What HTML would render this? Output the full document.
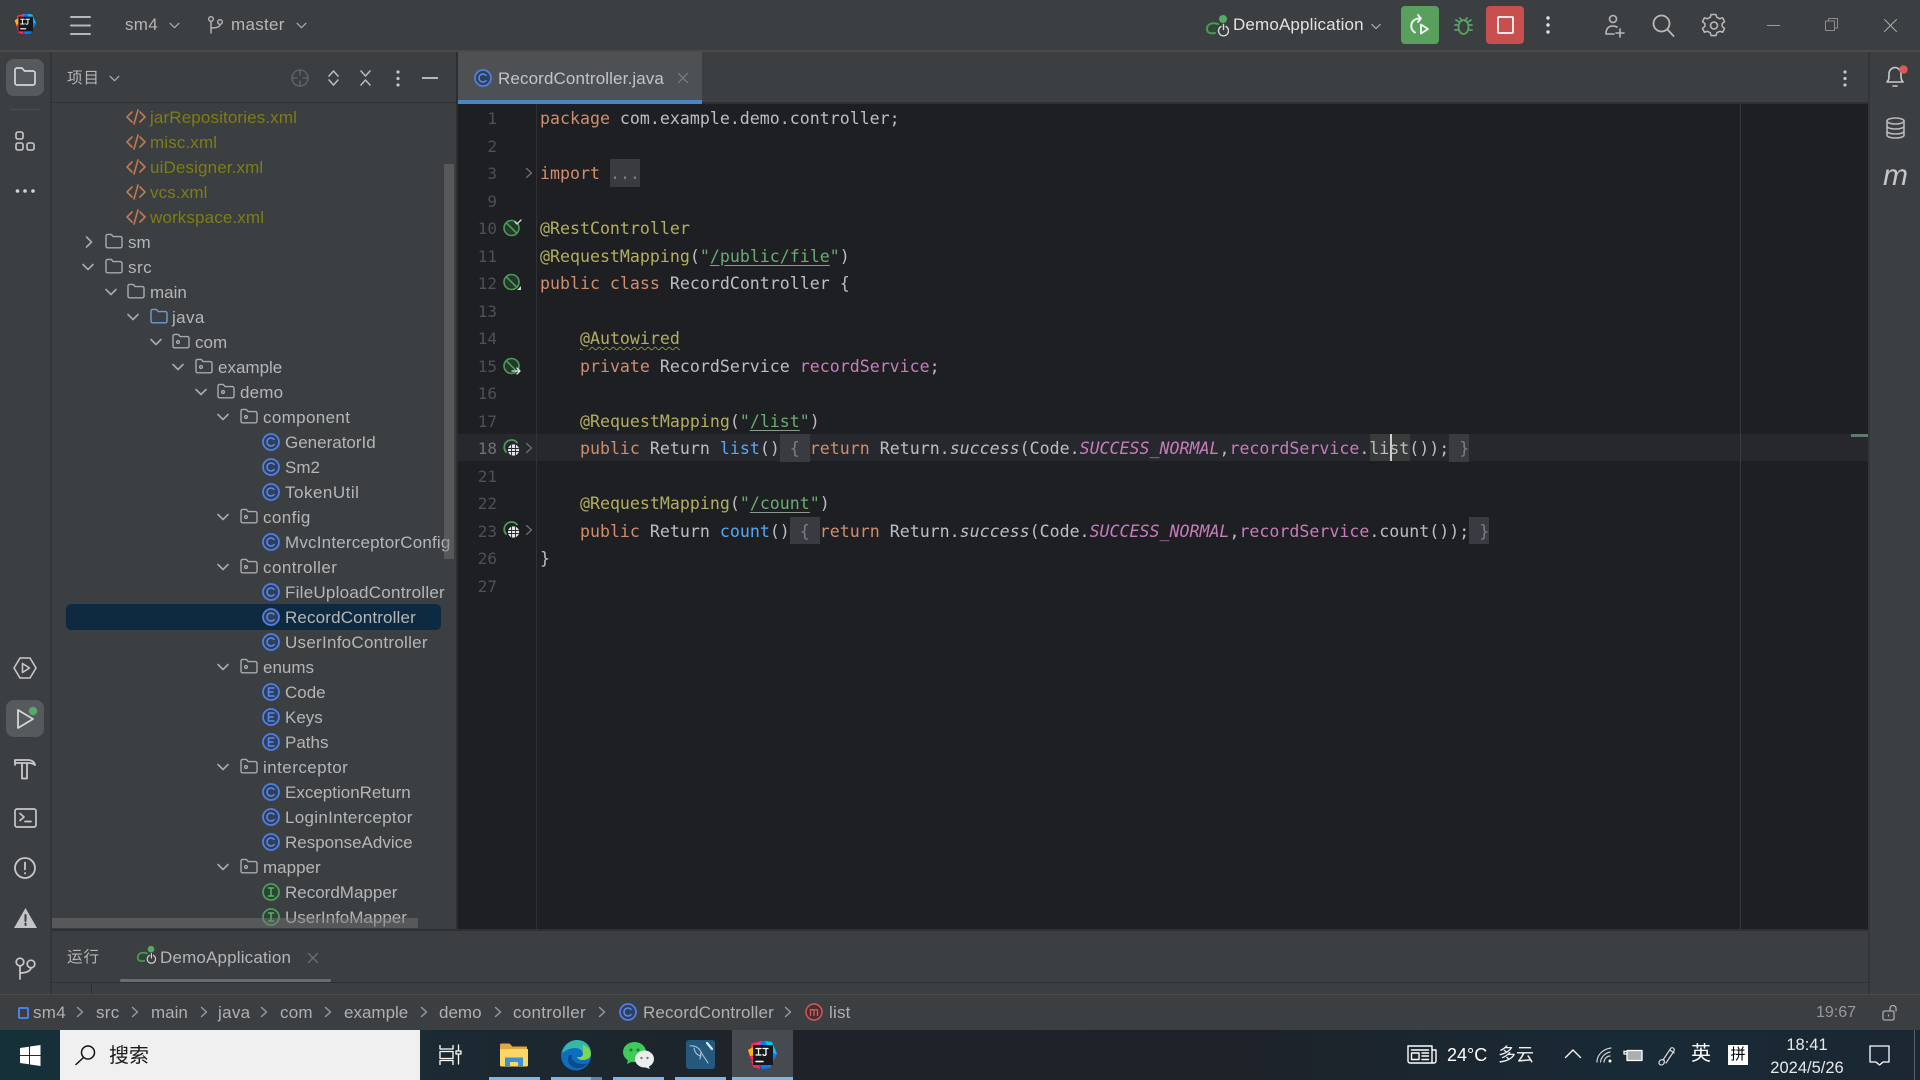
<!DOCTYPE html>
<html lang="zh"><head><meta charset="utf-8"><title>RecordController.java</title>
<style>
html,body{margin:0;padding:0;width:1920px;height:1080px;overflow:hidden;background:#3c3f41}
body{position:relative;font-family:"Liberation Sans","Noto Sans CJK SC",sans-serif;font-size:17px;color:#b4b6b8}
.a{position:absolute}
.t{position:absolute;white-space:nowrap;line-height:24px;height:24px}
svg{position:absolute;overflow:visible;fill:none;stroke-linecap:round;stroke-linejoin:round}
.s{stroke:#b6b8ba;stroke-width:1.6}
#tree{position:absolute;left:51px;top:103px;width:405px;height:827px;overflow:hidden}
#tree .in{position:absolute;left:-51px;top:1.5px;width:600px}
.r{position:relative;height:25px;line-height:25px;white-space:nowrap}
.r span{position:absolute;top:0}
.r svg.ch{width:12px;height:8px;top:8px;stroke:#a8abad;stroke-width:1.6}
.r svg.f{width:18px;height:16px;top:3px;stroke:#a8abad;stroke-width:1.4}
.r svg.k{width:20px;height:20px;top:2px;left:261px}
.x{color:#7d7d14;letter-spacing:.13px}
#code{font-family:"DejaVu Sans Mono","Liberation Mono",monospace;font-size:16.6px;color:#bcbec4}
.c{position:absolute;left:540px;height:27.5px;line-height:29.5px;white-space:pre}
.n{position:absolute;left:470px;width:27px;text-align:right;height:27.5px;line-height:29.5px;color:#4b5059;font-family:"DejaVu Sans Mono","Liberation Mono",monospace;font-size:16px}
.kw{color:#cf8e6d}.an{color:#b3ae60}.st{color:#6aab73}.fl{color:#c77dbb}.md{color:#56a8f5}
.u{text-decoration:underline;text-decoration-color:#8c9a90;text-underline-offset:3px}
.it{font-style:italic}
.fb{background:#393b40;color:#7a7e85;display:inline-block;height:27.5px}
.bc{position:absolute;top:1001px;line-height:24px;height:24px;color:#aeb0b2;white-space:nowrap}
.tb{position:absolute;top:1077px;height:3px;background:#76b9ed}
</style></head><body>
<svg width="0" height="0" style="position:absolute">
<defs>
<symbol id="fo" viewBox="0 0 18 16"><path d="M1 3a1.6 1.6 0 0 1 1.6-1.6h3.6l2 2.2h7.2A1.6 1.6 0 0 1 17 5.2v8a1.6 1.6 0 0 1-1.6 1.6H2.6A1.6 1.6 0 0 1 1 13.2z"/></symbol>
<symbol id="pk" viewBox="0 0 18 16"><path d="M1 3a1.6 1.6 0 0 1 1.6-1.6h3.6l2 2.2h7.2A1.6 1.6 0 0 1 17 5.2v8a1.6 1.6 0 0 1-1.6 1.6H2.6A1.6 1.6 0 0 1 1 13.2z"/><circle cx="6" cy="9" r="1.4"/></symbol>
<symbol id="dn" viewBox="0 0 12 8"><path d="M1 1.5l5 5 5-5"/></symbol>
<symbol id="rt" viewBox="0 0 8 12"><path d="M1.5 1l5 5-5 5"/></symbol>
<symbol id="cc" viewBox="0 0 20 20"><circle cx="10" cy="10" r="8" fill="#2f3f5e" stroke="#4f7fe0" stroke-width="1.8"/><path d="M13 7.4A4 4 0 1 0 13 12.6" stroke="#5d8ae6" stroke-width="1.5" fill="none"/></symbol>
<symbol id="ce" viewBox="0 0 20 20"><circle cx="10" cy="10" r="8" fill="#2f3f5e" stroke="#4f7fe0" stroke-width="1.8"/><path d="M13 6H7.5v8H13M7.5 10H12" stroke="#5d8ae6" stroke-width="1.5" fill="none"/></symbol>
<symbol id="ci" viewBox="0 0 20 20"><circle cx="10" cy="10" r="8" fill="#2b4532" stroke="#4e9a5d" stroke-width="1.8"/><path d="M7.5 6h5M10 6v8M7.5 14h5" stroke="#5fad70" stroke-width="1.5" fill="none"/></symbol>
<symbol id="xm" viewBox="0 0 20 16"><path d="M6 3L1 8l5 5M14 3l5 5-5 5M12 1L8 15" stroke="#c07a52" stroke-width="1.6" fill="none"/></symbol>
<symbol id="bean" viewBox="0 0 18 18"><circle cx="8.5" cy="9" r="7.5" stroke="#4c9a5a" stroke-width="1.6" fill="#24382a"/><path d="M3.5 4l10 10" stroke="#4c9a5a" stroke-width="1.6"/></symbol>
<symbol id="web" viewBox="0 0 18 18"><path d="M14 3.5A7 7 0 1 0 3 13" stroke="#4c9a5a" stroke-width="1.8" fill="none"/><circle cx="10.5" cy="11" r="5.6" fill="#e2e4e6"/><path d="M5.4 9.5h10M5.4 12.5h10M8.5 6v10M12.5 6v10" stroke="#26282e" stroke-width=".9"/></symbol>
<symbol id="ij" viewBox="0 0 30 30"><path d="M4 4L14 1l3 6-11 9z" fill="#fc318c"/><path d="M14 1l11 1 5 12-7 14-8 1-4-8z" fill="#087cfa"/><path d="M18 1l7 1 5 12-6-1z" fill="#07c3f2"/><path d="M2 11l5-9 6 5-6 14-4-3z" fill="#fe2857"/><path d="M1 10l5-3 3 8-6 1z" fill="#fdb60d"/><path d="M4 20l8 3 1 6-7-2z" fill="#fe2857"/><rect x="6" y="5" width="20" height="20" fill="#16181c"/><path d="M9 8.5h5M11.5 8.5v6.5M9 15h5M16 8.5h5M19 8.5v5.5a1.6 1.6 0 0 1-3 .6" stroke="#fff" stroke-width="1.3" fill="none"/><path d="M9 21.5h7" stroke="#fff" stroke-width="1.5"/></symbol>
<symbol id="runc" viewBox="0 0 24 24"><path d="M13 10C7 8 2 10 2 15c0 4 4 5 8 4" stroke="#4c9a5a" stroke-width="2" fill="#2d4a35"/><circle cx="18" cy="5" r="4" fill="#57a865"/><path d="M16 12.5a5 5 0 1 0 5 0M18.500 10.500v5" stroke="#d8dadc" stroke-width="1.400" fill="none"/></symbol>
</defs>
</svg>

<!-- chrome lines -->
<div class="a" style="left:0;top:50px;width:1920px;height:2px;background:#4b4a48"></div>
<div class="a" style="left:50px;top:52px;width:2px;height:942px;background:#333638"></div>
<div class="a" style="left:52px;top:102px;width:405px;height:1px;background:#2e3032"></div>
<div class="a" style="left:52px;top:929px;width:1816px;height:2px;background:#2e3032"></div>
<div class="a" style="left:52px;top:982px;width:1816px;height:1px;background:#2e3032"></div>
<div class="a" style="left:91px;top:982px;width:1px;height:12px;background:#2e3032"></div>
<div class="a" style="left:0;top:994px;width:1920px;height:1px;background:#4b4a48"></div>
<div class="a" style="left:456px;top:52px;width:2px;height:878px;background:#2c2e30"></div>
<div class="a" style="left:1868px;top:52px;width:2px;height:942px;background:#333638"></div>

<!-- title bar -->
<svg style="left:14px;top:13px" width="22" height="22"><use href="#ij" width="22" height="22"/></svg>
<svg class="s" style="left:71px;top:16px;stroke-width:2" width="20" height="20"><path d="M0 1h19M0 9.500h19M0 18h19"/></svg>
<div class="t" style="left:125px;top:13px;letter-spacing:.3px">sm4</div>
<svg class="s" style="left:169px;top:22px;stroke:#a8abad;stroke-width:1.4" width="11" height="7"><use href="#dn" width="11" height="7"/></svg>
<svg class="s" style="left:208px;top:16px;stroke-width:1.400" width="15" height="18"><circle cx="3" cy="3" r="2.300"/><circle cx="12" cy="6" r="2.300"/><path d="M3 5.500V17M3 12c5 0 9-1 9-3.500"/></svg>
<div class="t" style="left:231px;top:13px;letter-spacing:.3px">master</div>
<svg class="s" style="left:296px;top:22px;stroke:#a8abad;stroke-width:1.4" width="11" height="7"><use href="#dn" width="11" height="7"/></svg>

<svg style="left:1205px;top:14px" width="24" height="24"><use href="#runc" width="24" height="24"/></svg>
<div class="t" style="left:1233px;top:13px;color:#dfe1e3;letter-spacing:.15px">DemoApplication</div>
<svg style="left:1371px;top:23px;stroke:#b6b8ba;stroke-width:1.3" width="10" height="7"><use href="#dn" width="10" height="7"/></svg>
<div class="a" style="left:1401px;top:6px;width:38px;height:38px;border-radius:4px;background:#59a05f"></div>
<svg style="left:1409px;top:14px;stroke:#f0f2f0;stroke-width:1.900" width="21" height="23"><path d="M10 4.500A7.500 7.500 0 0 0 6 18.500M9 1l3 3.500-3 3.500"/><path d="M12 10.500v9l7-4.500z"/></svg>
<svg style="left:1454px;top:15px;stroke:#55a35f;stroke-width:1.800" width="19" height="21"><ellipse cx="9.500" cy="12" rx="5" ry="7"/><path d="M6 3l2 3M13 3l-2 3M4.500 10H1M14.500 10H18M4.500 15H1M14.500 15H18M5 7L2 5M14 7l3-2"/></svg>
<div class="a" style="left:1486px;top:6px;width:38px;height:38px;border-radius:4px;background:#c94f4f"></div>
<div class="a" style="left:1497px;top:16px;width:13px;height:14px;border:2px solid #f4e6e6;border-radius:2px"></div>
<svg style="left:1545px;top:15px;fill:#e0e2e4" width="6" height="20"><circle cx="3" cy="3" r="1.700"/><circle cx="3" cy="10" r="1.700"/><circle cx="3" cy="17" r="1.700"/></svg>
<svg class="s" style="left:1604px;top:14px" width="22" height="24"><circle cx="9" cy="5" r="3.500"/><path d="M2 20c0-5 2-8 7-8 2 0 3 .5 4 1M2 20h8M16 15v8M12 19h8"/></svg>
<svg class="s" style="left:1652px;top:14px;stroke-width:1.800" width="22" height="23"><circle cx="9.500" cy="9.500" r="8"/><path d="M15.500 15.500l6 6.500"/></svg>
<svg class="s" style="left:1702px;top:14px" width="24" height="24"><path d="M9 1h5l1 3 3 1.500 3-1 2 4-2.500 2v3l2.500 2-2 4-3-1-3 1.500-1 3H9l-1-3-3-1.500-3 1-2-4 2.500-2v-3L0 8.500l2-4 3 1L8 4z" transform="translate(.5 -.5) scale(.96)"/><circle cx="12" cy="11.500" r="3.500"/></svg>
<div class="a" style="left:1767px;top:25px;width:13px;height:1px;background:#9a9c9e"></div>
<svg style="left:1825px;top:18px;stroke:#8a8c8e;stroke-width:1" width="13" height="13"><rect x=".5" y="3" width="9" height="9.500"/><path d="M3.500 3V.5h9v9.500H9.500"/></svg>
<svg style="left:1884px;top:19px;stroke:#a8aaac;stroke-width:1" width="13" height="13"><path d="M.5.500l12 12M12.500.500l-12 12"/></svg>

<!-- left strip -->
<div class="a" style="left:6px;top:59px;width:38px;height:37px;border-radius:8px;background:#565a5c"></div>
<svg class="s" style="left:14px;top:67px;stroke:#d4d6d8;stroke-width:1.700" width="22" height="20"><path d="M1 3a2 2 0 0 1 2-2h5l2.500 3H19a2 2 0 0 1 2 2v10a2 2 0 0 1-2 2H3a2 2 0 0 1-2-2z"/></svg>
<div class="a" style="left:10px;top:109px;width:30px;height:1px;background:#4a4d50"></div>
<svg class="s" style="left:15px;top:131px;stroke:#c6c8ca" width="21" height="21"><rect x="1" y="1" width="7" height="7" rx="1.800"/><rect x="1" y="12" width="7" height="7" rx="1.800"/><rect x="12" y="12" width="7" height="7" rx="1.800"/></svg>
<svg style="left:15px;top:188px;fill:#d0d2d4" width="21" height="6"><circle cx="2.500" cy="3" r="1.800"/><circle cx="10" cy="3" r="1.800"/><circle cx="18" cy="3" r="1.800"/></svg>
<svg class="s" style="left:13px;top:657px;stroke:#c6c8ca" width="24" height="22"><path d="M7 1h10l6 10-6 10H7L1 11z"/><path d="M9.500 6.500v9l7-4.500z"/></svg>
<div class="a" style="left:6px;top:700px;width:38px;height:37px;border-radius:8px;background:#565a5c"></div>
<svg class="s" style="left:16px;top:708px;stroke:#d4d6d8;stroke-width:1.800" width="20" height="22"><path d="M2 2v18l15-9z"/></svg>
<svg style="left:28px;top:706px;fill:#57a865" width="10" height="10"><circle cx="5" cy="5" r="4.300"/></svg>
<svg class="s" style="left:14px;top:757px;stroke:#c6c8ca;stroke-width:1.800" width="22" height="23"><path d="M1 8V3h13c3 0 6 1 7 5-2-1.500-4-2-6-2H1M8 6v15.500h5V6"/></svg>
<svg class="s" style="left:14px;top:808px;stroke:#c6c8ca;stroke-width:1.700" width="23" height="20"><rect x="1" y="1" width="21" height="18" rx="2"/><path d="M6 5.500l4 3.500-4 3.500M11 13.500h6"/></svg>
<svg class="s" style="left:14px;top:857px;stroke:#c6c8ca;stroke-width:1.800" width="22" height="22"><circle cx="11" cy="11" r="10"/><path d="M11 5.500v7M11 16v.5"/></svg>
<svg style="left:14px;top:908px" width="23" height="20"><path d="M11.500 0L23 20H0z" fill="#c2c4c6"/><path d="M11.500 7v6M11.500 15.500v1.500" stroke="#3c3f41" stroke-width="2"/></svg>
<svg class="s" style="left:15px;top:957px;stroke:#c6c8ca;stroke-width:1.700" width="21" height="23"><circle cx="5" cy="5" r="3.800"/><circle cx="16" cy="7" r="3.800"/><path d="M5 9v13M5 16c6 0 11-2 11-5.500"/></svg>

<!-- project header -->
<div class="t" style="left:67px;top:67px;letter-spacing:1px;font-size:15.500px">项目</div>
<svg style="left:109px;top:75px;stroke:#a8abad;stroke-width:1.400" width="11" height="7"><use href="#dn" width="11" height="7"/></svg>
<svg style="left:291px;top:69px;stroke:#5e6163;stroke-width:1.600" width="18" height="18"><circle cx="9" cy="9" r="8"/><path d="M9 1v5M9 12v5M1 9h5M12 9h5"/></svg>
<svg class="s" style="left:328px;top:70px" width="11" height="16"><path d="M1 6l4.500-5L10 6M1 10l4.500 5L10 10"/></svg>
<svg class="s" style="left:360px;top:70px" width="11" height="16"><path d="M1 1l4.500 5L10 1M1 15l4.500-5L10 15"/></svg>
<svg style="left:395px;top:70px;fill:#c4c6c8" width="6" height="17"><circle cx="3" cy="2" r="1.600"/><circle cx="3" cy="8.500" r="1.600"/><circle cx="3" cy="15" r="1.600"/></svg>
<div class="a" style="left:422px;top:77px;width:16px;height:2px;background:#b6b8ba"></div>

<!-- tree -->
<div id="tree"><div class="in">
<div class="r"><svg style="left:126px;top:4px" width="20" height="16"><use href="#xm" width="20" height="16"/></svg><span class="x" style="left:150px">jarRepositories.xml</span></div>
<div class="r"><svg style="left:126px;top:4px" width="20" height="16"><use href="#xm" width="20" height="16"/></svg><span class="x" style="left:150px">misc.xml</span></div>
<div class="r"><svg style="left:126px;top:4px" width="20" height="16"><use href="#xm" width="20" height="16"/></svg><span class="x" style="left:150px">uiDesigner.xml</span></div>
<div class="r"><svg style="left:126px;top:4px" width="20" height="16"><use href="#xm" width="20" height="16"/></svg><span class="x" style="left:150px">vcs.xml</span></div>
<div class="r"><svg style="left:126px;top:4px" width="20" height="16"><use href="#xm" width="20" height="16"/></svg><span class="x" style="left:150px">workspace.xml</span></div>
<div class="r"><svg style="left:85px;top:6px;width:8px;height:12px;stroke:#a8abad;stroke-width:1.6"><use href="#rt" width="8" height="12"/></svg><svg class="f" style="left:105px"><use href="#fo" width="18" height="16"/></svg><span style="left:128px">sm</span></div>
<div class="r"><svg class="ch" style="left:82px"><use href="#dn" width="12" height="8"/></svg><svg class="f" style="left:105px"><use href="#fo" width="18" height="16"/></svg><span style="left:128px;letter-spacing:.5px">src</span></div>
<div class="r"><svg class="ch" style="left:105px"><use href="#dn" width="12" height="8"/></svg><svg class="f" style="left:127px"><use href="#fo" width="18" height="16"/></svg><span style="left:150px">main</span></div>
<div class="r"><svg class="ch" style="left:127px"><use href="#dn" width="12" height="8"/></svg><svg class="f" style="left:150px;stroke:#6f9bd8"><use href="#fo" width="18" height="16"/></svg><span style="left:172px;letter-spacing:.4px">java</span></div>
<div class="r"><svg class="ch" style="left:150px"><use href="#dn" width="12" height="8"/></svg><svg class="f" style="left:172px"><use href="#pk" width="18" height="16"/></svg><span style="left:195px">com</span></div>
<div class="r"><svg class="ch" style="left:172px"><use href="#dn" width="12" height="8"/></svg><svg class="f" style="left:195px"><use href="#pk" width="18" height="16"/></svg><span style="left:218px">example</span></div>
<div class="r"><svg class="ch" style="left:195px"><use href="#dn" width="12" height="8"/></svg><svg class="f" style="left:217px"><use href="#pk" width="18" height="16"/></svg><span style="left:240px;letter-spacing:.2px">demo</span></div>
<div class="r"><svg class="ch" style="left:217px"><use href="#dn" width="12" height="8"/></svg><svg class="f" style="left:240px"><use href="#pk" width="18" height="16"/></svg><span style="left:263px;letter-spacing:.35px">component</span></div>
<div class="r"><svg class="k"><use href="#cc" width="20" height="20"/></svg><span style="left:285px">GeneratorId</span></div>
<div class="r"><svg class="k"><use href="#cc" width="20" height="20"/></svg><span style="left:285px">Sm2</span></div>
<div class="r"><svg class="k"><use href="#cc" width="20" height="20"/></svg><span style="left:285px;letter-spacing:.5px">TokenUtil</span></div>
<div class="r"><svg class="ch" style="left:217px"><use href="#dn" width="12" height="8"/></svg><svg class="f" style="left:240px"><use href="#pk" width="18" height="16"/></svg><span style="left:263px;letter-spacing:.4px">config</span></div>
<div class="r"><svg class="k"><use href="#cc" width="20" height="20"/></svg><span style="left:285px;letter-spacing:.2px">MvcInterceptorConfig</span></div>
<div class="r"><svg class="ch" style="left:217px"><use href="#dn" width="12" height="8"/></svg><svg class="f" style="left:240px"><use href="#pk" width="18" height="16"/></svg><span style="left:263px;letter-spacing:.45px">controller</span></div>
<div class="r"><svg class="k"><use href="#cc" width="20" height="20"/></svg><span style="left:285px;letter-spacing:.25px">FileUploadController</span></div>
<div class="r"><div class="a" style="left:66px;top:-1px;width:375px;height:26px;border-radius:5px;background:#0e2a40"></div><svg class="k"><use href="#cc" width="20" height="20"/></svg><span style="left:285px;letter-spacing:.15px">RecordController</span></div>
<div class="r"><svg class="k"><use href="#cc" width="20" height="20"/></svg><span style="left:285px;letter-spacing:.27px">UserInfoController</span></div>
<div class="r"><svg class="ch" style="left:217px"><use href="#dn" width="12" height="8"/></svg><svg class="f" style="left:240px"><use href="#pk" width="18" height="16"/></svg><span style="left:263px">enums</span></div>
<div class="r"><svg class="k"><use href="#ce" width="20" height="20"/></svg><span style="left:285px">Code</span></div>
<div class="r"><svg class="k"><use href="#ce" width="20" height="20"/></svg><span style="left:285px">Keys</span></div>
<div class="r"><svg class="k"><use href="#ce" width="20" height="20"/></svg><span style="left:285px">Paths</span></div>
<div class="r"><svg class="ch" style="left:217px"><use href="#dn" width="12" height="8"/></svg><svg class="f" style="left:240px"><use href="#pk" width="18" height="16"/></svg><span style="left:263px;letter-spacing:.45px">interceptor</span></div>
<div class="r"><svg class="k"><use href="#cc" width="20" height="20"/></svg><span style="left:285px">ExceptionReturn</span></div>
<div class="r"><svg class="k"><use href="#cc" width="20" height="20"/></svg><span style="left:285px;letter-spacing:.3px">LoginInterceptor</span></div>
<div class="r"><svg class="k"><use href="#cc" width="20" height="20"/></svg><span style="left:285px">ResponseAdvice</span></div>
<div class="r"><svg class="ch" style="left:217px"><use href="#dn" width="12" height="8"/></svg><svg class="f" style="left:240px"><use href="#pk" width="18" height="16"/></svg><span style="left:263px">mapper</span></div>
<div class="r"><svg class="k"><use href="#ci" width="20" height="20"/></svg><span style="left:285px">RecordMapper</span></div>
<div class="r"><svg class="k"><use href="#ci" width="20" height="20"/></svg><span style="left:285px">UserInfoMapper</span></div>
</div></div>
<div class="a" style="left:444px;top:164px;width:10px;height:395px;background:rgba(120,120,122,.45)"></div>
<div class="a" style="left:52px;top:918px;width:366px;height:10px;background:rgba(120,120,122,.45)"></div>

<!-- tabs -->
<div class="a" style="left:458px;top:52px;width:244px;height:48px;background:#4e5154"></div>
<div class="a" style="left:458px;top:100px;width:244px;height:4px;background:#4a85c6"></div>
<div class="a" style="left:702px;top:102px;width:1166px;height:2px;background:#2e3032"></div>
<svg style="left:473px;top:68px" width="20" height="20"><use href="#cc" width="20" height="20"/></svg>
<div class="t" style="left:498px;top:67px;color:#c2c4c6;letter-spacing:.12px">RecordController.java</div>
<svg style="left:678px;top:73px;stroke:#7d8083;stroke-width:1.200" width="10" height="10"><path d="M.5.500l9 9M9.500.500l-9 9"/></svg>
<svg style="left:1842px;top:70px;fill:#c4c6c8" width="6" height="17"><circle cx="3" cy="2" r="1.600"/><circle cx="3" cy="8.500" r="1.600"/><circle cx="3" cy="15" r="1.600"/></svg>

<!-- editor -->
<div class="a" style="left:458px;top:104px;width:1410px;height:825px;background:#1e1f22"></div>
<div class="a" style="left:458px;top:434px;width:1410px;height:27px;background:#26282e"></div>
<div class="a" style="left:536px;top:104px;width:1px;height:825px;background:#303236"></div>
<div class="a" style="left:1740px;top:104px;width:1px;height:825px;background:#393b3f"></div>
<div class="a" style="left:1851px;top:434px;width:17px;height:3px;background:#5f7a68"></div>
<div class="a" style="left:1370px;top:434px;width:40px;height:27px;background:#373b39"></div>
<div class="a" style="left:1390px;top:434px;width:2px;height:27px;background:#ced0d6"></div>

<div id="code">
<div class="n" style="top:104px">1</div><div class="n" style="top:131.500px">2</div><div class="n" style="top:159px">3</div><div class="n" style="top:186.500px">9</div><div class="n" style="top:214px">10</div><div class="n" style="top:241.500px">11</div><div class="n" style="top:269px">12</div><div class="n" style="top:296.500px">13</div><div class="n" style="top:324px">14</div><div class="n" style="top:351.500px">15</div><div class="n" style="top:379px">16</div><div class="n" style="top:406.500px">17</div><div class="n" style="top:434px;color:#6e7178">18</div><div class="n" style="top:461.500px">21</div><div class="n" style="top:489px">22</div><div class="n" style="top:516.500px">23</div><div class="n" style="top:544px">26</div><div class="n" style="top:571.500px">27</div>
<div class="c" style="top:104px"><span class="kw">package</span> com.example.demo.controller;</div>
<div class="c" style="top:159px"><span class="kw">import</span> <span class="fb">...</span></div>
<div class="c" style="top:214px"><span class="an">@RestController</span></div>
<div class="c" style="top:241.500px"><span class="an">@RequestMapping</span>(<span class="st">"<span class="u">/public/file</span>"</span>)</div>
<div class="c" style="top:269px"><span class="kw">public class</span> RecordController {</div>
<div class="c" style="top:324px">    <span class="an" style="text-decoration:underline wavy #8a8a40 1px;text-underline-offset:2px">@Autowired</span></div>
<div class="c" style="top:351.500px">    <span class="kw">private</span> RecordService <span class="fl">recordService</span>;</div>
<div class="c" style="top:406.500px">    <span class="an">@RequestMapping</span>(<span class="st">"<span class="u">/list</span>"</span>)</div>
<div class="c" style="top:434px">    <span class="kw">public</span> Return <span class="md">list</span>()<span class="fb"> { </span><span class="kw">return</span> Return.<span class="it">success</span>(Code.<span class="fl it">SUCCESS_NORMAL</span>,<span class="fl">recordService</span>.list());<span class="fb"> }</span></div>
<div class="c" style="top:489px">    <span class="an">@RequestMapping</span>(<span class="st">"<span class="u">/count</span>"</span>)</div>
<div class="c" style="top:516.500px">    <span class="kw">public</span> Return <span class="md">count</span>()<span class="fb"> { </span><span class="kw">return</span> Return.<span class="it">success</span>(Code.<span class="fl it">SUCCESS_NORMAL</span>,<span class="fl">recordService</span>.count());<span class="fb"> }</span></div>
<div class="c" style="top:544px">}</div>
</div>
<svg style="left:526px;top:168px;stroke:#6f7276;stroke-width:1.200" width="6" height="10"><path d="M.5.500l5 4.500-5 4.500"/></svg>
<svg style="left:526px;top:443px;stroke:#6f7276;stroke-width:1.200" width="6" height="10"><path d="M.5.500l5 4.500-5 4.500"/></svg>
<svg style="left:526px;top:525px;stroke:#6f7276;stroke-width:1.200" width="6" height="10"><path d="M.5.500l5 4.500-5 4.500"/></svg>
<svg style="left:503px;top:219px" width="18" height="18"><use href="#bean" width="18" height="18"/><path d="M12 3l2 2 4-4" stroke="#d0d2d4" stroke-width="1.400"/></svg>
<svg style="left:503px;top:273px" width="18" height="18"><use href="#bean" width="18" height="18"/><path d="M14 17h4v-4z" fill="#d0d2d4"/></svg>
<svg style="left:503px;top:357px" width="18" height="18"><use href="#bean" width="18" height="18"/><path d="M9 14h8M14 11l3 3-3 3" stroke="#e0e2e4" stroke-width="1.300"/></svg>
<svg style="left:503px;top:439px" width="18" height="18"><use href="#web" width="18" height="18"/></svg>
<svg style="left:503px;top:521px" width="18" height="18"><use href="#web" width="18" height="18"/></svg>

<!-- right strip -->
<svg class="s" style="left:1885px;top:65px;stroke:#c8cacc" width="20" height="24"><path d="M2 17c2-2 2-4 2-8 0-4 3-6.500 6-6.500S16 5 16 9c0 4 0 6 2 8zM8 21h4"/></svg>
<svg style="left:1899px;top:65px;fill:#e05555" width="9" height="9"><circle cx="4.500" cy="4.500" r="4.200"/></svg>
<svg class="s" style="left:1886px;top:117px;stroke:#b6b8ba" width="19" height="22"><ellipse cx="9.500" cy="4" rx="8.500" ry="3"/><path d="M1 4v14c0 2 4 3 8.500 3s8.500-1 8.500-3V4M1 9c0 2 4 3 8.500 3S18 11 18 9M1 14c0 2 4 3 8.500 3s8.500-1 8.500-3"/></svg>
<div class="t" style="left:1883px;top:162px;font-size:30px;font-style:italic;color:#c4c6c8;line-height:28px;height:28px">m</div>

<!-- bottom tabs -->
<div class="t" style="left:67px;top:946px;font-size:15.500px;letter-spacing:1px">运行</div>
<svg style="left:136px;top:945px" width="20" height="20"><use href="#runc" width="20" height="20"/></svg>
<div class="t" style="left:160px;top:946px;letter-spacing:.17px">DemoApplication</div>
<svg style="left:308px;top:953px;stroke:#6c6f72;stroke-width:1.300" width="10" height="10"><path d="M.5.500l9 9M9.500.500l-9 9"/></svg>
<div class="a" style="left:120px;top:979px;width:211px;height:3px;border-radius:2px;background:#6b6e71"></div>

<!-- breadcrumb -->
<div class="a" style="left:18px;top:1007px;width:7px;height:8px;border:2px solid #4a80e0;border-radius:2px"></div>
<div class="bc" style="left:33px;letter-spacing:.3px">sm4</div>
<div class="bc" style="left:96px;letter-spacing:.3px">src</div>
<div class="bc" style="left:151px">main</div>
<div class="bc" style="left:218px;letter-spacing:.3px">java</div>
<div class="bc" style="left:280px;letter-spacing:.2px">com</div>
<div class="bc" style="left:344px">example</div>
<div class="bc" style="left:439px">demo</div>
<div class="bc" style="left:513px;letter-spacing:.3px">controller</div>
<svg style="left:618px;top:1002px" width="20" height="20"><use href="#cc" width="20" height="20"/></svg>
<div class="bc" style="left:643px;letter-spacing:.15px">RecordController</div>
<svg style="left:804px;top:1002px" width="20" height="20"><circle cx="10" cy="10" r="8" fill="#4a2c30" stroke="#c75450" stroke-width="1.700"/><path d="M6.500 13.500v-6M6.500 9c0-2 3.500-2 3.500 0v4.500M10 9c0-2 3.500-2 3.500 0v4.500" stroke="#d06060" stroke-width="1.300"/></svg>
<div class="bc" style="left:829px;letter-spacing:.2px">list</div>
<svg style="left:77px;top:1007px;stroke:#9a9c9e;stroke-width:1.400" width="6" height="10"><path d="M.5.500l5 4.500-5 4.500"/></svg>
<svg style="left:132px;top:1007px;stroke:#9a9c9e;stroke-width:1.400" width="6" height="10"><path d="M.5.500l5 4.500-5 4.500"/></svg>
<svg style="left:201px;top:1007px;stroke:#9a9c9e;stroke-width:1.400" width="6" height="10"><path d="M.5.500l5 4.500-5 4.500"/></svg>
<svg style="left:261px;top:1007px;stroke:#9a9c9e;stroke-width:1.400" width="6" height="10"><path d="M.5.500l5 4.500-5 4.500"/></svg>
<svg style="left:325px;top:1007px;stroke:#9a9c9e;stroke-width:1.400" width="6" height="10"><path d="M.5.500l5 4.500-5 4.500"/></svg>
<svg style="left:421px;top:1007px;stroke:#9a9c9e;stroke-width:1.400" width="6" height="10"><path d="M.5.500l5 4.500-5 4.500"/></svg>
<svg style="left:495px;top:1007px;stroke:#9a9c9e;stroke-width:1.400" width="6" height="10"><path d="M.5.500l5 4.500-5 4.500"/></svg>
<svg style="left:599px;top:1007px;stroke:#9a9c9e;stroke-width:1.400" width="6" height="10"><path d="M.5.500l5 4.500-5 4.500"/></svg>
<svg style="left:785px;top:1007px;stroke:#9a9c9e;stroke-width:1.400" width="6" height="10"><path d="M.5.500l5 4.500-5 4.500"/></svg>
<div class="bc" style="left:1816px;font-size:16px;color:#97999b">19:67</div>
<svg class="s" style="left:1882px;top:1005px;stroke:#a8aaac;stroke-width:1.300" width="17" height="16"><rect x="1" y="6" width="11" height="9" rx="1.500"/><path d="M8 6V3.500a3 3 0 0 1 6 0V6M6.500 10v1"/></svg>

<!-- taskbar -->
<div class="a" style="left:0;top:1030px;width:1920px;height:50px;background:linear-gradient(90deg,#16303a 0,#1b2a33 22%,#1e2329 40%,#1d2229 65%,#182a36 85%,#1b2733 100%)"></div>
<svg style="left:20px;top:1045px;fill:#fff" width="21" height="21"><path d="M0 3l9-1.300v8.300H0zM10 1.500L20.500 0v10H10zM0 11h9v8.300L0 18zM10 11h10.500v10L10 19.500z"/></svg>
<div class="a" style="left:60px;top:1030px;width:360px;height:50px;background:#f0f0f0"></div>
<svg style="left:75px;top:1045px;stroke:#111;stroke-width:1.500" width="21" height="20"><circle cx="13" cy="7.500" r="6.500"/><path d="M8.500 12.500L1 19.500"/></svg>
<div class="t" style="left:109px;top:1043px;color:#1a1a1a;font-size:20px;line-height:26px;height:26px">搜索</div>
<svg style="left:440px;top:1045px;stroke:#fff;stroke-width:1.300" width="20" height="20"><path d="M0 .500v3.500h13V.5M0 19.500V15.500h13v4M0 6.500h13v7H0zM18.500 0v5M18.500 9v10M16 6h5v3h-5z"/></svg>
<!-- explorer -->
<svg style="left:500px;top:1043px" width="28" height="24"><path d="M0 2a1.500 1.500 0 0 1 1.500-1.500h8l3 3H27v18a1.500 1.500 0 0 1-1.500 1.500h-24A1.500 1.500 0 0 1 0 21.500z" fill="#e0a83c"/><path d="M0 6h28v16a1.500 1.500 0 0 1-1.500 1.500h-25A1.500 1.500 0 0 1 0 22z" fill="#fcd768"/><path d="M5 23v-8.500h18V23h-5v-4h-8v4z" fill="#3f8fd4"/></svg>
<div class="tb" style="left:489px;width:51px"></div>
<!-- edge -->
<svg style="left:561px;top:1040px" width="31" height="31"><circle cx="15" cy="15.500" r="15" fill="#0f6dc0"/><path d="M1 13C3 5 9 0 16 0c8 0 14 6 14 13 0 5-4 7-8 7-3 0-5-1-6-3 4 1 6-1 6-3 0-3-3-6-8-6-6 0-10 3-13 5z" fill="#35b8a8"/><path d="M22 5c5 2 8 5 8 9 0 4-4 6-8 6-3 0-5-1-6-3 4 1 6-1 6-3z" fill="#7ed64f"/><path d="M8 15c-3 6 1 12 7 13 4 1 9-1 12-5-5 2-10 1-13-1-3-2-4-4-3-7z" fill="#0c4a88"/></svg>
<div class="tb" style="left:551px;width:51px"></div><div class="tb" style="left:591px;width:11px;background:#5389b3"></div>
<!-- wechat -->
<svg style="left:623px;top:1042px" width="31" height="28"><ellipse cx="11.500" cy="10" rx="11.500" ry="10" fill="#3ecb5a"/><path d="M5 17l-1 5 6-3z" fill="#3ecb5a"/><circle cx="8" cy="8" r="1.500" fill="#197a30"/><circle cx="15" cy="8" r="1.500" fill="#197a30"/><ellipse cx="21.500" cy="17" rx="9.500" ry="8.500" fill="#eceeee"/><path d="M25 23l2 4-6-2z" fill="#eceeee"/><circle cx="18.500" cy="16" r="1.200" fill="#777"/><circle cx="24.500" cy="16" r="1.200" fill="#777"/></svg>
<div class="tb" style="left:613px;width:51px"></div>
<!-- mysql wb -->
<div class="a" style="left:686px;top:1040px;width:29px;height:29px;border-radius:3px;background:#25587d"></div>
<svg style="left:686px;top:1040px;stroke:#aac4d6;stroke-width:1.100" width="29" height="29"><path d="M4 6c5-1 9 2 11 6s4 6 7 11M8 8c1 5 3 7 7 8M15 12l-1 7"/><path d="M21 3l5 6" stroke="#dfe8ee" stroke-width="2.200"/></svg>
<div class="tb" style="left:675px;width:51px"></div>
<!-- idea -->
<div class="a" style="left:732px;top:1030px;width:61px;height:50px;background:#474a4e"></div>
<svg style="left:747px;top:1040px" width="30" height="30"><use href="#ij" width="30" height="30"/></svg>
<div class="tb" style="left:732px;width:61px"></div>
<!-- tray -->
<svg style="left:1407px;top:1045px;stroke:#fff;stroke-width:1.400" width="30" height="20"><path d="M1 1h24v17H3a2 2 0 0 1-2-2zM25 5h4v11a2 2 0 0 1-2 2h-2M4.500 5h17M4.500 8h7.500v6.500H4.500zM15 8h6.500M15 11h6.500M15 14.500h6.500"/></svg>
<div class="t" style="left:1447px;top:1043px;color:#fff;font-size:18px">24°C</div>
<div class="t" style="left:1498px;top:1043px;color:#f0f0f0;font-size:18px">多云</div>
<svg style="left:1565px;top:1049px;stroke:#fff;stroke-width:1.300" width="16" height="9"><path d="M.5 8.500L8 1l7.500 7.500"/></svg>
<svg style="left:1596px;top:1047px;stroke:#d0d2d4;stroke-width:1.200" width="16" height="17"><path d="M1 15C1 8 7 2 15 1M4.500 15C5 10 9 6 14 5M8 15c0-3 3-6 6-6"/><circle cx="14" cy="14" r="1.500" fill="#fff" stroke="none"/></svg>
<svg style="left:1623px;top:1048px;stroke:#fff;stroke-width:1.300" width="20" height="14"><rect x="4" y="2.500" width="15" height="10" fill="#e8e8e8" fill-opacity=".7"/><path d="M1 3.500h3M1 3V6h3"/></svg>
<svg style="left:1658px;top:1046px;stroke:#d8dadc;stroke-width:1.200" width="20" height="20"><path d="M1 17c0-3 3-4 5-3 1 2 0 5-3 5-1 0-2-1-2-2zM5 14L13 2c2-1 4 1 3 3L8 17M12 4l4 3"/></svg>
<div class="t" style="left:1691px;top:1041px;color:#fff;font-size:20px;line-height:26px;height:26px">英</div>
<div class="a" style="left:1728px;top:1045px;width:20px;height:20px;background:#fff;color:#000;font-size:15px;line-height:20px;text-align:center">拼</div>
<div class="t" style="left:1777px;top:1033px;width:60px;text-align:center;color:#e8e8e8;font-size:16.500px">18:41</div>
<div class="t" style="left:1767px;top:1056px;width:80px;text-align:center;color:#e8e8e8;font-size:16.500px">2024/5/26</div>
<svg style="left:1869px;top:1045px;stroke:#fff;stroke-width:1.300" width="21" height="21"><path d="M1 1h19v16h-6l-3.500 3L7 17H1z"/></svg>
<div class="a" style="left:1914px;top:1030px;width:1px;height:50px;background:#5b6268"></div>
</body></html>
